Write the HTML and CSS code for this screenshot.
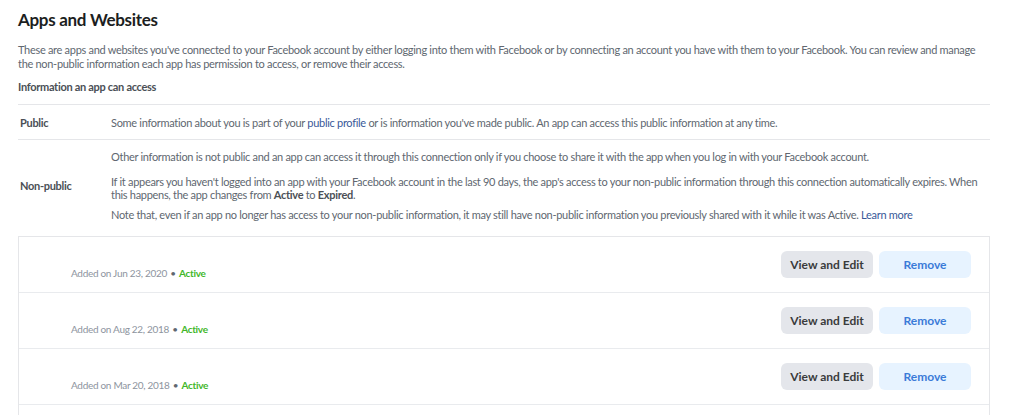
FILE: index.html
```html
<!DOCTYPE html>
<html>
<head>
<meta charset="utf-8">
<link rel="stylesheet" href="styles.css">
</head>
<body>
<div class="page">
  <h1 class="title">Apps and Websites</h1>
  <p class="desc">These are apps and websites you've connected to your Facebook account by either logging into them with Facebook or by connecting an account you have with them to your Facebook. You can review and manage the non-public information each app has permission to access, or remove their access.</p>
  <div class="subhead">Information an app can access</div>
  <div class="info">
    <div class="info-row public">
      <div class="label">Public</div>
      <div class="body">
        <p>Some information about you is part of your <a class="link">public profile</a> or is information you've made public. An app can access this public information at any time.</p>
      </div>
    </div>
    <div class="info-row nonpublic">
      <div class="label">Non-public</div>
      <div class="body">
        <p>Other information is not public and an app can access it through this connection only if you choose to share it with the app when you log in with your Facebook account.</p>
        <p class="p2">If it appears you haven't logged into an app with your Facebook account in the last 90 days, the app's access to your non-public information through this connection automatically expires. When this happens, the app changes from <b>Active</b> to <b>Expired</b>.</p>
        <p class="p3">Note that, even if an app no longer has access to your non-public information, it may still have non-public information you previously shared with it while it was Active. <a class="link">Learn more</a></p>
      </div>
    </div>
  </div>
  <div class="apps">
    <div class="app">
      <div class="app-info">
        <div class="app-name"></div>
        <div class="app-meta">Added on Jun 23, 2020 <span class="dot">•</span> <span class="status">Active</span></div>
      </div>
      <div class="actions">
        <button class="btn btn-gray">View and Edit</button>
        <button class="btn btn-blue">Remove</button>
      </div>
    </div>
    <div class="app">
      <div class="app-info">
        <div class="app-name"></div>
        <div class="app-meta">Added on Aug 22, 2018 <span class="dot">•</span> <span class="status">Active</span></div>
      </div>
      <div class="actions">
        <button class="btn btn-gray">View and Edit</button>
        <button class="btn btn-blue">Remove</button>
      </div>
    </div>
    <div class="app">
      <div class="app-info">
        <div class="app-name"></div>
        <div class="app-meta">Added on Mar 20, 2018 <span class="dot">•</span> <span class="status">Active</span></div>
      </div>
      <div class="actions">
        <button class="btn btn-gray">View and Edit</button>
        <button class="btn btn-blue">Remove</button>
      </div>
    </div>
    <div class="app app-last"></div>
  </div>
</div>
</body>
</html>
```

FILE: styles.css
```css
html, body {
  margin: 0;
  padding: 0;
  overflow: hidden;
  background: #ffffff;
}
body {
  font-family: "Lato", "Open Sans", sans-serif;
  color: #1c1e21;
  letter-spacing: -0.3px;
}
.page {
  width: 972px;
  padding: 10px 0 0 18px;
}
.title {
  margin: 0;
  font-size: 17px;
  line-height: 20px;
  font-weight: 700;
  color: #1c1e21;
}
.desc {
  margin: 13px 0 0;
  font-size: 11px;
  line-height: 14px;
  color: #606770;
  padding-right: 4px;
}
.subhead {
  margin-top: 9px;
  font-size: 11px;
  line-height: 14px;
  font-weight: 700;
  color: #4b4f56;
  padding-bottom: 10px;
}
.info-row {
  display: flex;
  align-items: center;
  border-top: 1px solid #e5e6e9;
}
.info-row.public {
  height: 34px;
  border-bottom: 1px solid #e5e6e9;
}
.info-row.nonpublic {
  border-top: none;
  padding: 10px 0 9px;
}
.label {
  width: 93px;
  flex: none;
  padding-left: 2px;
  box-sizing: border-box;
  font-size: 11px;
  font-weight: 700;
  color: #4b4f56;
}
.body {
  flex: 1;
  font-size: 11px;
  line-height: 13px;
  color: #606770;
  padding-right: 10px;
}
.body p {
  margin: 0;
}
.body .p2 {
  margin-top: 12px;
}
.body .p3 {
  margin-top: 7px;
}
.body b {
  font-weight: 700;
  color: #4b4f56;
}
.link {
  color: #385898;
}
.apps {
  margin-top: 6px;
  width: 970px;
  border: 1px solid #e5e6e9;
  border-bottom: none;
}
.app {
  height: 55px;
  display: flex;
  align-items: center;
  justify-content: space-between;
  padding: 0 18px 0 52px;
  border-bottom: 1px solid #e9ebee;
}
.app-info {
  display: flex;
  flex-direction: column;
  gap: 2px;
}
.app-name {
  height: 16px;
}
.app-meta {
  font-size: 10px;
  line-height: 13px;
  color: #8d949e;
}
.dot {
  color: #606770;
  margin: 0 1px;
}
.status {
  color: #42b72a;
  font-weight: 700;
}
.actions {
  display: flex;
  gap: 6px;
}
.btn {
  width: 92px;
  height: 27px;
  border: none;
  border-radius: 6px;
  font-family: "Lato", "Open Sans", sans-serif;
  font-size: 12px;
  font-weight: 700;
  letter-spacing: 0;
  padding: 0;
}
.btn-gray {
  background: #e4e6eb;
  color: #3a3b3c;
}
.btn-blue {
  background: #e7f3ff;
  color: #3b7bd8;
}
```
